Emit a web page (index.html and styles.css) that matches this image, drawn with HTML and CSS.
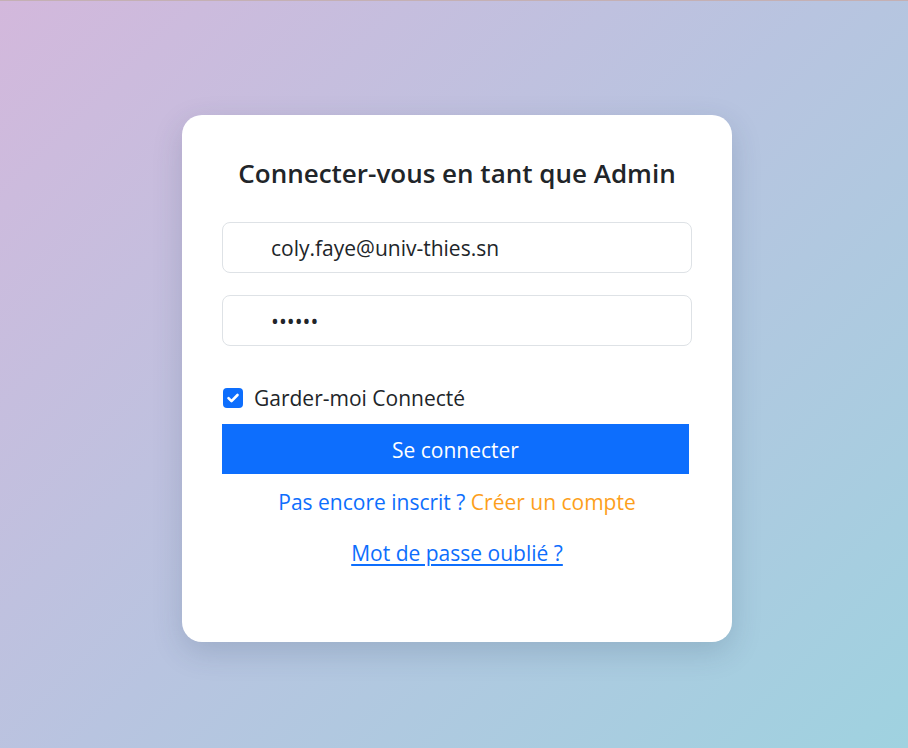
FILE: index.html
```html
<!DOCTYPE html>
<html lang="fr">
<head>
<meta charset="utf-8">
<title>Connexion Admin</title>
<link rel="stylesheet" href="styles.css">
</head>
<body>
<main class="page">
  <form class="card">
    <h1 class="title">Connecter-vous en tant que Admin</h1>
    <div class="field"><input class="input" type="email" value="coly.faye@univ-thies.sn"></div>
    <div class="field field-last"><input class="input" type="password" value="123456"></div>
    <label class="remember">
      <span class="check"><svg viewBox="0 0 20 20" width="20" height="20"><path d="M5.5 10.2l3 3 6-6.2" fill="none" stroke="#fff" stroke-width="2.6" stroke-linecap="round" stroke-linejoin="round"/></svg></span>
      <span>Garder-moi Connecté</span>
    </label>
    <button class="btn" type="button">Se connecter</button>
    <p class="signup">Pas encore inscrit ? <a class="create" href="#">Créer un compte</a></p>
    <p class="forgot"><a href="#">Mot de passe oublié ?</a></p>
  </form>
</main>
</body>
</html>
```
FILE: styles.css
```css
html, body {
  margin: 0;
  padding: 0;
}
body {
  font-family: "Open Sans", "Noto Sans", sans-serif;
  color: #212529;
  background: linear-gradient(135deg, #d3b8dc 0%, #b8c4e0 50%, #9fd2e0 100%);
  border-top: 1px solid #c4b0b4;
  min-height: 747px;
}
.page {
  min-height: 747px;
  display: flex;
  align-items: center;
  justify-content: center;
  padding: 8px 0 0 6px;
  box-sizing: border-box;
}
.card {
  width: 550px;
  box-sizing: border-box;
  background: #fff;
  border-radius: 20px;
  padding: 43px 40px 40px;
  box-shadow: 0 10px 30px rgba(40, 60, 90, 0.18);
}
.title {
  margin: 0 0 33px;
  font-size: 26px;
  line-height: 31px;
  font-weight: 600;
  text-align: center;
  color: #212529;
}
.field {
  margin-bottom: 22px;
}
.field-last {
  margin-bottom: 40px;
}
.input {
  display: block;
  width: 100%;
  box-sizing: border-box;
  height: 51px;
  border: 1px solid #dee2e6;
  border-radius: 8px;
  padding: 0 16px 0 48px;
  font-family: inherit;
  font-size: 21px;
  color: #212529;
  background: #fff;
  outline: none;
}
.remember {
  display: flex;
  align-items: center;
  gap: 11px;
  font-size: 21px;
  line-height: 24px;
  margin-bottom: 14px;
  padding-left: 1px;
}
.check {
  width: 20px;
  height: 20px;
  border-radius: 4px;
  background: #0d6efd;
  display: flex;
}
.btn {
  display: block;
  width: 467px;
  height: 50px;
  border: 0;
  border-radius: 0;
  background: #0d6efd;
  color: #fff;
  font-family: inherit;
  font-size: 21px;
  padding: 2px 0 0;
  margin: 0 0 16px;
}
.signup, .forgot {
  margin: 0;
  text-align: center;
  font-size: 21px;
  line-height: 24px;
  color: #0d6efd;
}
.signup {
  margin-bottom: 27px;
}
.forgot {
  margin-bottom: 37px;
}
.create {
  color: #fd9f1c;
  text-decoration: none;
}
.forgot a {
  color: #0d6efd;
  text-decoration: underline;
  text-underline-offset: 3px;
}
```
